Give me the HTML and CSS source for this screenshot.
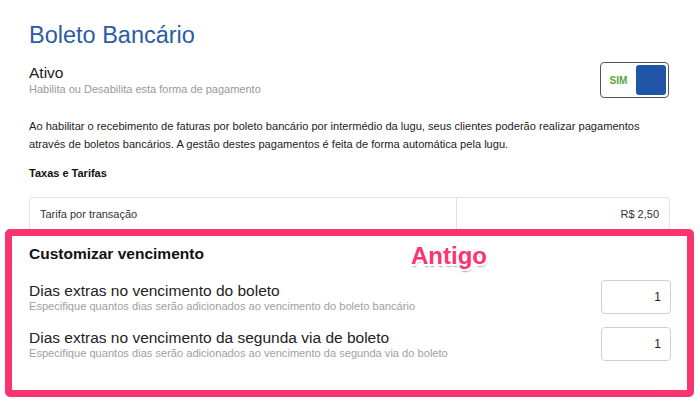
FILE: index.html
```html
<!DOCTYPE html>
<html lang="pt-BR">
<head>
<meta charset="utf-8">
<title>Boleto Bancário</title>
<link rel="stylesheet" href="styles.css">
</head>
<body>
<div class="page">
  <h1 class="title">Boleto Bancário</h1>

  <div class="setting">
    <div class="setting-text">
      <div class="setting-label">Ativo</div>
      <div class="setting-help">Habilita ou Desabilita esta forma de pagamento</div>
    </div>
    <div class="toggle">
      <span class="toggle-label">SIM</span>
      <span class="toggle-knob"></span>
    </div>
  </div>

  <p class="intro">Ao habilitar o recebimento de faturas por boleto bancário por intermédio da lugu, seus clientes poderão realizar pagamentos através de boletos bancários. A gestão destes pagamentos é feita de forma automática pela lugu.</p>

  <h2 class="subhead">Taxas e Tarifas</h2>

  <div class="fee-table">
    <div class="fee-name">Tarifa por transação</div>
    <div class="fee-value">R$ 2,50</div>
  </div>

  <section class="custom">
    <span class="stamp">Antigo</span>
    <h3 class="custom-title">Customizar vencimento</h3>
    <div class="field">
      <div class="field-text">
        <div class="field-label">Dias extras no vencimento do boleto</div>
        <div class="field-help">Especifique quantos dias serão adicionados ao vencimento do boleto bancário</div>
      </div>
      <input class="field-input" type="text" value="1">
    </div>
    <div class="field">
      <div class="field-text">
        <div class="field-label">Dias extras no vencimento da segunda via de boleto</div>
        <div class="field-help">Especifique quantos dias serão adicionados ao vencimento da segunda via do boleto</div>
      </div>
      <input class="field-input" type="text" value="1">
    </div>
  </section>
</div>
</body>
</html>
```

FILE: styles.css
```css
html, body {
  margin: 0;
  padding: 0;
  background: #ffffff;
}

body {
  font-family: "Liberation Sans", Arial, Helvetica, sans-serif;
  color: #222222;
}

.page {
  width: 641px;
  padding: 21px 0 0 29px;
}

.title {
  margin: 0;
  font-size: 23.5px;
  line-height: 28px;
  font-weight: normal;
  color: #2a5ca6;
}

.setting {
  margin-top: 13px;
  display: flex;
  align-items: center;
  justify-content: space-between;
}

.setting-label {
  font-size: 15.5px;
  line-height: 18px;
  color: #222;
}

.setting-help {
  font-size: 11px;
  line-height: 14px;
  color: #999999;
}

.toggle {
  width: 69px;
  height: 36px;
  box-sizing: border-box;
  border: 1.5px solid #555555;
  border-radius: 4px;
  padding: 2px;
  display: flex;
  align-items: stretch;
  margin-right: 1px;
}

.toggle-label {
  flex: 1;
  display: flex;
  align-items: center;
  justify-content: center;
  padding-right: 2px;
  font-size: 10px;
  font-weight: bold;
  color: #55a83c;
}

.toggle-knob {
  width: 30px;
  background: #1f56a8;
  border-radius: 3px;
}

.intro {
  margin: 19px 0 0;
  font-size: 11.1px;
  line-height: 18px;
  color: #222;
}

.subhead {
  margin: 11px 0 0;
  font-size: 11px;
  line-height: 18px;
  font-weight: bold;
  color: #111;
}

.fee-table {
  margin-top: 15px;
  display: flex;
  height: 33px;
  box-sizing: border-box;
  border: 1px solid #e2e2e2;
  border-radius: 3px;
  font-size: 11px;
  color: #333;
}

.fee-name {
  width: 427px;
  box-sizing: border-box;
  padding: 0 10px;
  display: flex;
  align-items: center;
  border-right: 1px solid #e2e2e2;
}

.fee-value {
  flex: 1;
  padding: 0 10px;
  display: flex;
  align-items: center;
  justify-content: flex-end;
}

.custom {
  position: relative;
  margin: -1px 0 0 -24px;
  width: 689px;
  height: 168px;
  box-sizing: border-box;
  border: 7px solid #fb3470;
  border-radius: 5px;
  padding: 9px 16px 0 17px;
}

.stamp {
  position: absolute;
  left: 399px;
  top: 7px;
  font-size: 24px;
  line-height: 26px;
  font-weight: bold;
  color: #fb3470;
  text-shadow:
    -1.5px -1.5px 0 #fff, 1.5px -1.5px 0 #fff, -1.5px 1.5px 0 #fff, 1.5px 1.5px 0 #fff,
    0 -1.5px 0 #fff, 0 1.5px 0 #fff, -1.5px 0 0 #fff, 1.5px 0 0 #fff,
    1px 2.5px 1.5px rgba(0, 0, 0, 0.35);
}

.custom-title {
  margin: 0;
  font-size: 15.5px;
  line-height: 18px;
  font-weight: bold;
  color: #111;
}

.field {
  margin-top: 17px;
  display: flex;
  align-items: center;
  justify-content: space-between;
}

.field + .field {
  margin-top: 13px;
}

.field-label {
  font-size: 15.5px;
  line-height: 18px;
  color: #222;
}

.field-help {
  font-size: 11.1px;
  line-height: 13px;
  color: #a0a0a0;
}

.field-input {
  width: 70px;
  height: 34px;
  box-sizing: border-box;
  border: 1px solid #cfcfcf;
  border-radius: 4px;
  padding: 0 9px;
  text-align: right;
  font-family: "Liberation Sans", Arial, sans-serif;
  font-size: 12px;
  color: #222;
  background: #fff;
  margin: 0;
  outline: none;
}
```
